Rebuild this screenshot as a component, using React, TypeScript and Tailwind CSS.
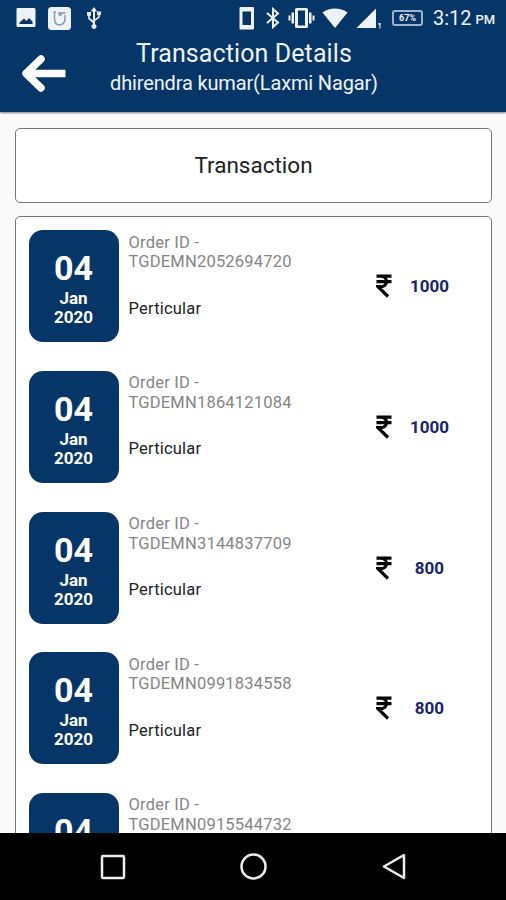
import React from 'react';

interface Transaction {
  orderId: string;
  day: string;
  month: string;
  year: string;
  amount: number;
}

const transactions: Transaction[] = [
  { orderId: 'TGDEMN2052694720', day: '04', month: 'Jan', year: '2020', amount: 1000 },
  { orderId: 'TGDEMN1864121084', day: '04', month: 'Jan', year: '2020', amount: 1000 },
  { orderId: 'TGDEMN3144837709', day: '04', month: 'Jan', year: '2020', amount: 800 },
  { orderId: 'TGDEMN0991834558', day: '04', month: 'Jan', year: '2020', amount: 800 },
  { orderId: 'TGDEMN0915544732', day: '04', month: 'Jan', year: '2020', amount: 800 },
];

const StatusBar: React.FC = () => (
  <div className="flex h-9 items-center pl-4 text-[#eef3fa]">
    {/* Notifications */}
    <svg width="20" height="20" viewBox="0 0 20 20" fill="currentColor" className="shrink-0">
      <path fillRule="evenodd" d="M1.500 0h16.500a1.500 1.500 0 0 1 1.500 1.500v16a1.500 1.500 0 0 1-1.500 1.500H2a1.500 1.500 0 0 1-1.500-1.500v-16A1.500 1.500 0 0 1 1.500 0ZM3.500 16h13v-2.500l-3.500-3.500-2.500 3-2.500-2.500-4.500 4Z" />
    </svg>
    <svg width="24" height="23" viewBox="0 0 24 23" className="ml-3 shrink-0" fill="none">
      <rect width="23" height="23" rx="3.500" fill="currentColor" />
      <path d="M6.500 5v6.500c0 4 2 6.500 5 6.500s5.500-2.500 5.500-6V8M5.500 5h2.500M10 6h1.500v3M13 8.500V6h4.500" stroke="#8b969e" strokeWidth="1.500" />
    </svg>
    <svg width="16" height="22" viewBox="0 0 16 22" className="ml-[14px] shrink-0" fill="currentColor">
      <path d="M8 0 4.800 4.500H7v9L3.800 11V8.700H5V5H1v3.700h1.200V12L7 16v1.200a2.500 2.500 0 1 0 2 0V14l4.800-3.500V8H15V4.500h-4V8h1.200v1.700L9 12V4.500h2.200Z" />
    </svg>

    {/* System icons */}
    <svg width="16" height="23" viewBox="0 0 16 23" className="ml-[137px] shrink-0" fill="currentColor">
      <path fillRule="evenodd" d="M1.500 0H14a1 1 0 0 1 1 1v20.500a1 1 0 0 1-1 1H1.500a1 1 0 0 1-1-1V1a1 1 0 0 1 1-1ZM3.500 4.500v13.500H12V4.500Z" />
    </svg>
    <svg width="14" height="22" viewBox="0 0 14 22" className="ml-[11px] shrink-0" fill="none" stroke="currentColor" strokeWidth="2">
      <path d="M1 6l11 9.500L7 20V2l5 4.500L1 16" />
    </svg>
    <svg width="27" height="20" viewBox="0 0 27 20" className="ml-2 shrink-0" fill="currentColor">
      <path fillRule="evenodd" d="M8.500 0h10a1.500 1.500 0 0 1 1.500 1.500v17a1.500 1.500 0 0 1-1.500 1.500h-10A1.500 1.500 0 0 1 7 18.500v-17A1.500 1.500 0 0 1 8.500 0ZM10 2.500v15h7v-15Z" />
      <path d="M3.500 4.500H6v11H3.500ZM.500 7.500h2v5h-2ZM21 4.500h2.500v11H21ZM24.500 7.500h2v5h-2Z" />
    </svg>
    <svg width="26" height="20" viewBox="0 0 26 20" className="ml-[7px] shrink-0" fill="currentColor">
      <path d="M.500 4.500C7.500-1 18.500-1 25.500 4.500L13 20Z" />
    </svg>
    <svg width="26" height="21" viewBox="0 0 26 21" className="ml-2 shrink-0" fill="currentColor">
      <path d="M20 .500v19.500H.500ZM22.500 15h2v5l-1 1v-4h-1Z" />
    </svg>
    <span className="ml-[10px] flex h-4 w-[31px] shrink-0 items-center justify-center rounded-[3px] border-2 border-[#9fb2cc] text-[9px] leading-none font-bold">
      67%
    </span>
    <span className="ml-[10px] text-[20px] leading-none">3:12</span>
    <span className="ml-1 pt-[3px] text-[13px] leading-none font-medium">PM</span>
  </div>
);

const Header: React.FC = () => (
  <header className="h-[112px] shrink-0 bg-[#063667] shadow-[0_1px_2px_rgba(40,30,60,0.6)]">
    <StatusBar />
    <div className="flex">
      <button className="mt-[18px] ml-[21px] h-[40px] w-[46px] shrink-0" aria-label="Back">
        <svg width="46" height="40" viewBox="0 0 46 40" fill="none" stroke="white" strokeWidth="7.500">
          <path d="M20 5 5 19.500 20 34" strokeLinecap="round" strokeLinejoin="round" />
          <path d="M6 19.500h38.500" />
        </svg>
      </button>
      <div className="ml-[43px] flex w-[268px] flex-col items-center whitespace-nowrap text-[#eef3fa]">
        <h1 className="mt-[2px] text-[25px] leading-[31px] tracking-[0.1px]">Transaction Details</h1>
        <p className="text-[20px] leading-[29px] tracking-[-0.15px]">dhirendra kumar(Laxmi Nagar)</p>
      </div>
    </div>
  </header>
);

const DateTile: React.FC<{ item: Transaction }> = ({ item }) => (
  <div className="flex h-[112px] w-[90px] shrink-0 flex-col items-center rounded-[14px] bg-[#063667] pt-[18px] font-bold text-white">
    <span className="text-[34px] leading-[40px]">{item.day}</span>
    <span className="text-[17px] leading-[20px]">{item.month}</span>
    <span className="text-[17px] leading-[19px]">{item.year}</span>
  </div>
);

const TransactionRow: React.FC<{ item: Transaction }> = ({ item }) => (
  <li className="flex h-[140.6px]">
    <DateTile item={item} />
    <div className="ml-[10px] w-[235px] pt-[2.5px] text-[16.5px] leading-[19.5px] tracking-[0.2px]">
      <p className="text-[#858585]">Order ID -</p>
      <p className="text-[#858585]">{item.orderId}</p>
      <p className="mt-[27px] text-[#222]">Perticular</p>
    </div>
    <svg width="18" height="24" viewBox="0 0 18 24" className="mt-[44px] ml-[12px] shrink-0" fill="none" stroke="black" strokeWidth="3.200">
      <path d="M.500 2.200h15M.500 7.700h15M.500 2.200h4c8 0 8 10.500 0 10.500H2L12 22.500" />
    </svg>
    <span className="mt-[45px] ml-[8px] w-[56px] text-center text-[17px] leading-[22px] font-bold text-[#17246b]">
      {item.amount}
    </span>
  </li>
);

const NavBar: React.FC = () => (
  <nav className="flex h-[67px] shrink-0 items-center justify-between bg-black px-[99px]">
    <svg width="28" height="28" viewBox="0 0 28 28" fill="none" stroke="#eee" strokeWidth="2.500">
      <rect x="3" y="3" width="22" height="22" rx="1" />
    </svg>
    <svg width="28" height="28" viewBox="0 0 28 28" fill="none" stroke="#eee" strokeWidth="2.500">
      <circle cx="14.500" cy="13.500" r="12" />
    </svg>
    <svg width="28" height="28" viewBox="0 0 28 28" fill="none" stroke="#eee" strokeWidth="2.500" strokeLinejoin="round">
      <path d="M25 2v23L5 13.500Z" />
    </svg>
  </nav>
);

const App: React.FC = () => (
  <div className="flex h-screen flex-col overflow-hidden bg-[#fafafa] font-['Roboto',sans-serif]">
    <Header />
    <main className="min-h-0 flex-1 overflow-hidden px-[14.5px] pt-[15.5px]">
      <h2 className="flex h-[75px] items-center justify-center rounded-[5px] border border-[#777] bg-white pt-px pl-px text-[22.5px] text-[#222]">
        Transaction
      </h2>
      <ul className="mt-[13px] rounded-[5px] border border-[#777] bg-white pt-[13.9px] pl-[13px]">
        {transactions.map((item) => (
          <TransactionRow key={item.orderId} item={item} />
        ))}
      </ul>
    </main>
    <NavBar />
  </div>
);

export default App;
